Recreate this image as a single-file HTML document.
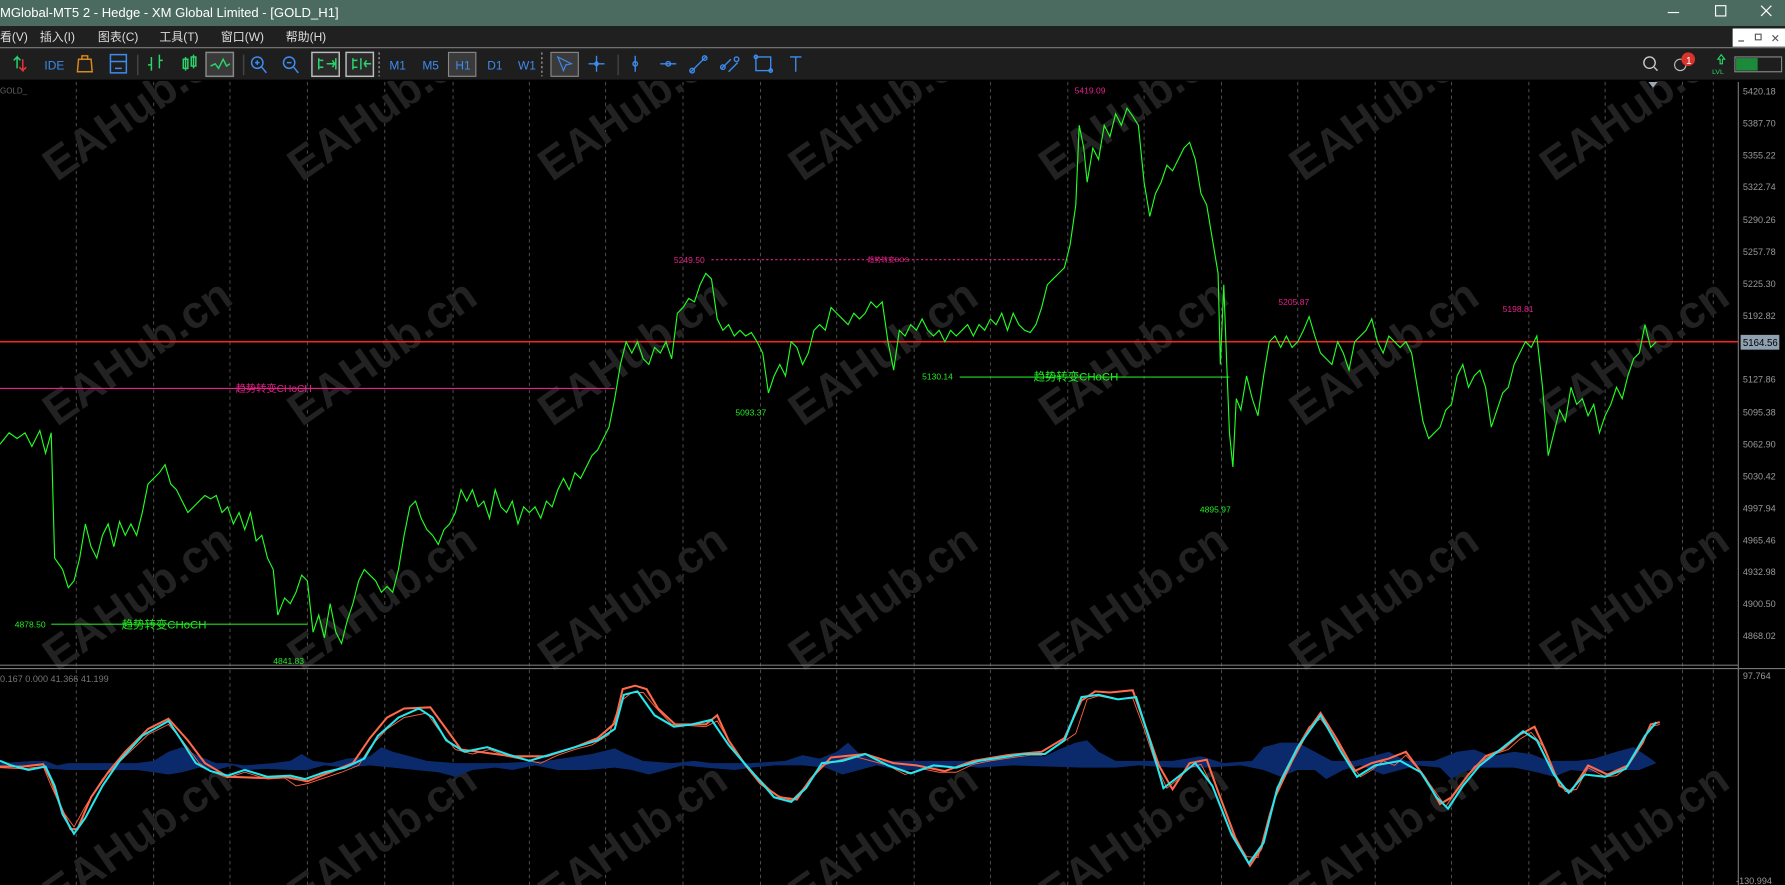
<!DOCTYPE html>
<html><head><meta charset="utf-8"><style>
html,body{margin:0;padding:0;background:#000;overflow:hidden}
svg{display:block}
text{font-family:"Liberation Sans","Noto Sans CJK SC",sans-serif}
</style></head><body>
<svg width="1785" height="885" viewBox="0 0 1568 777" preserveAspectRatio="none" xmlns="http://www.w3.org/2000/svg">
<defs><clipPath id="cc"><rect x="0" y="71" width="1568" height="706"/></clipPath></defs>
<!-- title bar -->
<rect x="0" y="0" width="1568" height="23" fill="#4b6b60"/>
<text x="0" y="15" font-size="11.5" fill="#fff">MGlobal-MT5 2 - Hedge - XM Global Limited - [GOLD_H1]</text>
<line x1="1465" y1="11" x2="1475" y2="11" stroke="#fff" stroke-width="1"/>
<rect x="1507" y="5" width="9" height="9" fill="none" stroke="#fff"/>
<path d="M1547 5l9 9M1556 5l-9 9" stroke="#fff"/>
<!-- menu -->
<rect x="0" y="23" width="1568" height="19" fill="#202020"/>
<g font-size="10.5" fill="#ddd">
<text x="0" y="36">看(V)</text><text x="35" y="36">插入(I)</text><text x="86" y="36">图表(C)</text><text x="140" y="36">工具(T)</text><text x="194" y="36">窗口(W)</text><text x="251" y="36">帮助(H)</text>
</g>
<rect x="1522" y="25" width="46" height="16" fill="#fff"/>
<path d="M1527 36h5M1542 30h5v5h-5zM1557 31l5 5M1562 31l-5 5" stroke="#555" fill="none"/>
<line x1="0" y1="42" x2="1568" y2="42" stroke="#8a8a8a"/>
<rect x="0" y="43" width="1568" height="27" fill="#1e1e1e"/>
<!-- toolbar icons -->
<g stroke-width="1.3" fill="none">
<path d="M15 60v-10l-3 3M15 50l3 3" stroke="#2bd46a"/><path d="M20 52v10l-3-3M20 62l3-3" stroke="#e33"/>
<text x="39" y="61" font-size="10.5" fill="#3c8cf0" stroke="none">IDE</text>
<path d="M69 52h11l1 11h-13zM72 52v-3h5v3" stroke="#d78a1c"/>
<path d="M97 48h14v16h-14zM97 54h14M101 60h6" stroke="#3c8cf0"/>
<line x1="121" y1="48" x2="121" y2="66" stroke="#444"/>
<path d="M133 50v12M130 57h3M140 48v12M140 53h3" stroke="#2bd46a"/>
<path d="M163 50v12M161 52h4v8h-4zM170 48v12M168 50h4v8h-4z" stroke="#2bd46a"/>
<rect x="181" y="46" width="24" height="21" fill="#3a3a3a" stroke="#888"/>
<path d="M185 58l4-2 3 4 4-8 3 6 3-2" stroke="#2bd46a"/>
<line x1="214" y1="48" x2="214" y2="66" stroke="#444"/>
<circle cx="226" cy="55" r="5" stroke="#3c8cf0"/><path d="M230 59l4 5M224 55h4M226 53v4" stroke="#3c8cf0"/>
<circle cx="254" cy="55" r="5" stroke="#3c8cf0"/><path d="M258 59l4 5M252 55h4" stroke="#3c8cf0"/>
<rect x="274" y="46" width="24" height="21" fill="#2a2a2a" stroke="#bbb"/>
<path d="M280 51v10M284 53h-4v6h4M287 56h7M292 53l2 3-2 3M295 51v10" stroke="#2bd46a"/>
<rect x="304" y="46" width="24" height="21" fill="#2a2a2a" stroke="#bbb"/>
<path d="M310 51v10M314 53h-4v6h4M317 51v10M320 56h6M322 53l-2 3 2 3" stroke="#2bd46a"/>
</g>
<line x1="333" y1="46" x2="333" y2="67" stroke="#aaa" stroke-dasharray="2,2"/>
<g font-size="10.5" fill="#3c8cf0"><text x="342" y="61">M1</text><text x="371" y="61">M5</text>
<rect x="394" y="46" width="24" height="21" fill="#3a3a3a" stroke="#888"/><text x="400" y="61">H1</text>
<text x="428" y="61">D1</text><text x="455" y="61">W1</text></g>
<line x1="476" y1="46" x2="476" y2="67" stroke="#aaa" stroke-dasharray="2,2"/>
<rect x="484" y="46" width="24" height="21" fill="#3a3a3a" stroke="#888"/>
<path d="M490 50l12 6-5 1-2 5z" stroke="#3c8cf0" fill="none"/>
<g stroke="#3c8cf0" fill="none" stroke-width="1.2">
<path d="M524 49v14M517 56h14"/><circle cx="524" cy="56" r="1.5"/>
<line x1="543" y1="48" x2="543" y2="66" stroke="#444"/>
<path d="M558 49v14"/><circle cx="558" cy="56" r="2"/>
<path d="M580 56h14"/><circle cx="587" cy="56" r="2"/>
<path d="M607 63l13-13"/><circle cx="608" cy="62" r="2"/><circle cx="619" cy="51" r="2"/>
<path d="M634 60l8-8M640 63l8-8"/><circle cx="635" cy="59" r="2"/><circle cx="647" cy="52" r="2"/>
<rect x="664" y="50" width="13" height="12"/><circle cx="664" cy="50" r="1.5"/><circle cx="677" cy="62" r="1.5"/>
<path d="M694 50h10M699 50v13"/>
</g>
<circle cx="1449" cy="55" r="5" stroke="#ccc" fill="none" stroke-width="1.2"/><path d="M1453 59l3 3" stroke="#ccc" stroke-width="1.2"/>
<circle cx="1476" cy="57" r="5" stroke="#bbb" fill="none"/><circle cx="1483" cy="52" r="6" fill="#d9342b"/><text x="1481" y="56" font-size="9" fill="#fff">1</text>
<path d="M1509 52l3-4 3 4h-2v4h-2v-4z" stroke="#2bd46a" fill="none"/><text x="1504" y="65" font-size="6" fill="#2bd46a">LVL</text>
<rect x="1524" y="50" width="41" height="13" fill="none" stroke="#888"/><rect x="1525" y="51" width="19" height="11" fill="#1c8a3a"/>
<!-- chart area -->
<rect x="0" y="70" width="1568" height="707" fill="#000"/>
<text x="0" y="82" font-size="7" fill="#666">GOLD_</text>
<g stroke="#555" stroke-dasharray="3,3" stroke-width="0.8">
<line x1="67" y1="72" x2="67" y2="777"/><line x1="135" y1="72" x2="135" y2="777"/><line x1="202" y1="72" x2="202" y2="777"/><line x1="270" y1="72" x2="270" y2="777"/><line x1="338" y1="72" x2="338" y2="777"/><line x1="398" y1="72" x2="398" y2="777"/><line x1="465" y1="72" x2="465" y2="777"/><line x1="532" y1="72" x2="532" y2="777"/><line x1="600" y1="72" x2="600" y2="777"/><line x1="668" y1="72" x2="668" y2="777"/><line x1="735" y1="72" x2="735" y2="777"/><line x1="803" y1="72" x2="803" y2="777"/><line x1="870" y1="72" x2="870" y2="777"/><line x1="938" y1="72" x2="938" y2="777"/><line x1="1005" y1="72" x2="1005" y2="777"/><line x1="1073" y1="72" x2="1073" y2="777"/><line x1="1140" y1="72" x2="1140" y2="777"/><line x1="1208" y1="72" x2="1208" y2="777"/><line x1="1275" y1="72" x2="1275" y2="777"/><line x1="1343" y1="72" x2="1343" y2="777"/><line x1="1410" y1="72" x2="1410" y2="777"/><line x1="1478" y1="72" x2="1478" y2="777"/><line x1="1505" y1="72" x2="1505" y2="777"/>
</g>
<!-- watermarks -->
<g clip-path="url(#cc)" font-size="40" font-weight="bold" fill="#222" font-family="Liberation Sans,sans-serif">
<text transform="translate(50,160) rotate(-35)">EAHub.cn</text><text transform="translate(265,160) rotate(-35)">EAHub.cn</text><text transform="translate(485,160) rotate(-35)">EAHub.cn</text><text transform="translate(705,160) rotate(-35)">EAHub.cn</text><text transform="translate(925,160) rotate(-35)">EAHub.cn</text><text transform="translate(1145,160) rotate(-35)">EAHub.cn</text><text transform="translate(1365,160) rotate(-35)">EAHub.cn</text>
<text transform="translate(50,375) rotate(-35)">EAHub.cn</text><text transform="translate(265,375) rotate(-35)">EAHub.cn</text><text transform="translate(485,375) rotate(-35)">EAHub.cn</text><text transform="translate(705,375) rotate(-35)">EAHub.cn</text><text transform="translate(925,375) rotate(-35)">EAHub.cn</text><text transform="translate(1145,375) rotate(-35)">EAHub.cn</text><text transform="translate(1365,375) rotate(-35)">EAHub.cn</text>
<text transform="translate(50,590) rotate(-35)">EAHub.cn</text><text transform="translate(265,590) rotate(-35)">EAHub.cn</text><text transform="translate(485,590) rotate(-35)">EAHub.cn</text><text transform="translate(705,590) rotate(-35)">EAHub.cn</text><text transform="translate(925,590) rotate(-35)">EAHub.cn</text><text transform="translate(1145,590) rotate(-35)">EAHub.cn</text><text transform="translate(1365,590) rotate(-35)">EAHub.cn</text>
<text transform="translate(50,800) rotate(-35)">EAHub.cn</text><text transform="translate(265,800) rotate(-35)">EAHub.cn</text><text transform="translate(485,800) rotate(-35)">EAHub.cn</text><text transform="translate(705,800) rotate(-35)">EAHub.cn</text><text transform="translate(925,800) rotate(-35)">EAHub.cn</text><text transform="translate(1145,800) rotate(-35)">EAHub.cn</text><text transform="translate(1365,800) rotate(-35)">EAHub.cn</text>
</g>
<!-- axis -->
<line x1="1527" y1="72" x2="1527" y2="777" stroke="#777"/>
<g font-size="8" fill="#999">
<text x="1531" y="83">5420.18</text><text x="1531" y="111">5387.70</text><text x="1531" y="139">5355.22</text><text x="1531" y="167">5322.74</text><text x="1531" y="196">5290.26</text><text x="1531" y="224">5257.78</text><text x="1531" y="252">5225.30</text><text x="1531" y="280">5192.82</text><text x="1531" y="336">5127.86</text><text x="1531" y="365">5095.38</text><text x="1531" y="393">5062.90</text><text x="1531" y="421">5030.42</text><text x="1531" y="449">4997.94</text><text x="1531" y="477">4965.46</text><text x="1531" y="505">4932.98</text><text x="1531" y="533">4900.50</text><text x="1531" y="561">4868.02</text><text x="1531" y="596">97.764</text><text x="1525" y="776">-130.994</text>
</g>
<path d="M1448 72l4 5 4-5z" fill="#9ab"/>
<!-- separator -->
<line x1="0" y1="584" x2="1527" y2="584" stroke="#777"/><line x1="0" y1="587" x2="1568" y2="587" stroke="#777"/>
<text x="0" y="599" font-size="8" fill="#777">0.167 0.000 41.366 41.199</text>
<!-- structure lines -->
<line x1="0" y1="341" x2="540" y2="341" stroke="#e8218a" stroke-width="1"/>
<text x="207" y="344" font-size="9" fill="#e8218a">趋势转变CHoCH</text>
<line x1="625" y1="228" x2="938" y2="228" stroke="#e8218a" stroke-dasharray="2,2"/>
<text x="592" y="231" font-size="7.5" fill="#e8218a">5249.50</text><text x="762" y="230" font-size="6" fill="#e8218a">趋势转变BOS</text>
<line x1="843" y1="331" x2="1080" y2="331" stroke="#22dd22"/>
<text x="810" y="333" font-size="7.5" fill="#22ee22">5130.14</text><text x="908" y="334" font-size="10" fill="#22ee22">趋势转变CHoCH</text>
<line x1="45" y1="548" x2="270" y2="548" stroke="#22dd22"/>
<text x="13" y="551" font-size="7.5" fill="#22ee22">4878.50</text><text x="107" y="552" font-size="10" fill="#22ee22">趋势转变CHoCH</text>
<g font-size="7.5">
<text x="646" y="365" fill="#22ee22">5093.37</text><text x="240" y="583" fill="#22ee22">4841.83</text><text x="1054" y="450" fill="#22ee22">4895.97</text>
<text x="944" y="82" fill="#e8218a">5419.09</text><text x="1123" y="268" fill="#e8218a">5205.87</text><text x="1320" y="274" fill="#e8218a">5198.81</text>
</g>
<line x1="0" y1="300" x2="1527" y2="300" stroke="#ff2020" stroke-width="1.3"/>
<rect x="1529" y="294" width="34" height="13" fill="#8fa0b0"/><text x="1531" y="304" font-size="8.5" fill="#000">5164.56</text>
<!-- price line -->
<polyline fill="none" stroke="#22ff22" stroke-width="1" points="0,390 8,380 15,385 22,380 28,392 35,378 40,398 45,380 48,490 55,500 60,516 65,510 70,490 75,460 80,480 85,490 90,470 95,460 100,480 105,458 110,470 115,460 120,470 125,450 130,425 135,420 140,415 145,408 150,425 155,430 160,440 165,450 170,445 175,440 180,435 185,438 190,435 195,450 200,445 205,460 210,450 215,465 220,450 225,475 230,470 235,490 240,500 244,540 250,525 255,530 260,520 265,505 270,510 275,555 280,540 285,560 290,530 295,555 300,565 305,545 310,530 315,510 320,500 325,505 330,510 335,520 340,515 345,520 350,500 355,470 360,445 365,440 370,455 375,465 380,470 385,478 390,465 395,460 400,450 405,430 410,440 415,430 420,445 425,440 430,455 435,430 440,445 445,450 450,440 455,460 460,445 465,450 470,445 475,455 480,440 485,445 490,430 495,420 500,430 505,415 510,420 515,410 520,400 525,395 530,385 535,375 540,350 545,320 550,300 555,310 560,300 565,315 570,320 575,305 580,310 585,300 590,315 595,275 600,270 605,262 610,265 615,250 620,240 625,245 630,280 635,290 640,285 645,295 650,290 655,295 660,292 665,300 670,310 675,345 680,330 685,320 690,330 695,300 700,305 705,320 710,310 715,290 720,285 725,290 730,270 735,275 740,280 745,285 750,275 755,280 760,275 765,265 770,270 775,265 780,300 785,325 790,290 795,295 800,285 805,290 810,280 815,290 820,295 825,290 830,300 835,290 840,295 845,290 850,285 855,295 860,285 865,290 870,280 875,285 880,275 885,290 890,275 895,285 900,290 905,292 910,285 915,270 920,250 925,245 930,240 935,235 940,215 945,180 948,110 952,130 955,160 960,130 965,140 970,110 975,120 980,100 985,110 990,95 995,102 1000,110 1005,160 1010,190 1015,170 1020,160 1025,145 1030,150 1035,140 1040,130 1045,125 1050,140 1055,170 1060,180 1065,210 1070,240 1072,320 1075,250 1078,330 1080,380 1083,410 1086,350 1090,360 1095,330 1100,350 1105,365 1110,330 1115,300 1120,295 1125,305 1130,295 1135,305 1140,300 1145,290 1150,278 1155,295 1160,310 1165,315 1170,320 1175,300 1180,310 1185,325 1190,300 1195,295 1200,290 1205,280 1210,300 1215,310 1220,295 1225,300 1230,305 1235,300 1240,310 1245,340 1250,370 1255,385 1260,380 1265,375 1270,360 1275,355 1280,330 1285,320 1290,340 1295,330 1300,325 1305,340 1310,375 1315,360 1320,345 1325,340 1330,320 1335,310 1340,300 1345,305 1350,295 1355,340 1360,400 1365,380 1370,360 1375,370 1380,340 1385,355 1390,350 1395,365 1400,355 1405,380 1410,365 1415,355 1420,340 1425,350 1430,330 1435,315 1440,310 1445,285 1450,305 1455,300"/>
<!-- histogram -->
<path fill="#0b2a6b" d="M0,670 L30,668 40,668 50,672 60,670 110,670 120,670 135,668 148,660 160,656 175,664 190,670 200,670 215,672 240,670 255,668 265,662 275,668 290,670 305,666 325,664 335,656 345,660 360,664 375,668 400,670 440,670 480,668 520,662 540,657 550,662 565,668 590,670 610,668 625,670 660,670 690,668 705,663 720,666 735,660 745,652 755,662 770,668 800,668 830,668 860,668 880,666 900,664 918,664 930,658 945,652 955,650 965,660 980,668 1000,668 1030,668 1055,664 1075,670 1100,668 1110,656 1125,652 1140,652 1155,660 1170,668 1190,668 1205,664 1220,660 1235,668 1260,668 1280,660 1295,658 1310,664 1330,660 1345,662 1360,668 1385,668 1400,666 1420,660 1435,656 1450,666 1455,670 L1440,676 1420,676 1400,678 1380,676 1365,682 1350,678 1330,674 1300,674 1285,678 1275,684 1265,674 1245,672 1230,676 1215,680 1205,676 1195,672 1180,676 1165,684 1155,676 1140,676 1125,682 1110,676 1090,672 1060,674 1030,674 1000,672 980,674 950,674 920,673 890,672 860,674 840,672 810,676 790,676 770,672 755,676 740,680 725,674 705,672 680,672 660,674 645,676 620,674 600,672 585,676 570,680 555,676 540,674 515,676 490,676 470,672 450,676 435,674 415,676 400,682 385,678 365,676 345,674 325,672 305,674 285,672 270,676 255,676 235,675 215,676 205,672 190,676 175,674 160,678 148,680 135,678 120,676 100,676 75,676 60,676 45,675 30,672 15,672 0,672 Z"/>
<!-- oscillator -->
<polyline fill="none" stroke="#ff6040" stroke-width="0.8" points="0,674 20,675 38,673 45,690 55,712 65,726 75,708 90,684 110,664 130,645 148,636 160,650 175,670 185,677 200,683 215,678 235,684 250,683 260,690 270,688 285,683 300,678 315,672 325,656 340,640 355,630 375,626 385,640 400,658 415,662 430,658 445,664 460,667 475,670 490,663 505,658 520,654 535,645 545,616 555,608 565,608 575,620 590,636 605,637 620,638 630,633 640,650 650,666 665,682 680,697 695,703 705,693 720,673 735,668 750,664 765,668 780,672 795,680 810,675 825,678 840,678 855,671 870,668 890,665 905,663 915,663 930,654 945,644 955,614 965,611 980,614 995,613 1005,640 1015,670 1025,692 1035,684 1045,674 1055,671 1065,690 1080,728 1095,752 1105,753 1115,715 1125,684 1140,655 1150,638 1160,631 1170,645 1185,668 1195,682 1205,676 1215,668 1225,672 1235,663 1250,680 1260,694 1270,708 1280,694 1295,673 1310,663 1325,658 1335,649 1345,643 1355,655 1365,677 1375,695 1385,693 1395,674 1410,682 1420,681 1430,673 1440,654 1450,638 1458,636"/>
<polyline fill="none" stroke="#ff6a4a" stroke-width="1.8" points="0,673 20,673 38,671 45,685 52,705 62,728 68,728 80,700 95,678 110,660 130,640 148,631 165,650 180,670 200,682 230,683 250,682 270,686 290,678 310,670 325,648 340,630 355,622 378,621 392,640 405,658 420,660 450,664 480,664 505,656 525,648 540,635 547,605 558,602 568,605 578,622 593,636 620,636 630,628 640,650 655,672 668,688 685,700 700,702 712,684 730,665 760,662 785,670 805,672 830,677 855,668 885,663 915,660 935,648 950,615 962,607 975,608 995,606 1007,640 1018,672 1030,693 1045,670 1060,667 1070,695 1085,735 1098,760 1108,745 1120,700 1135,668 1150,640 1160,626 1175,650 1190,677 1205,670 1220,666 1235,660 1252,683 1265,706 1275,700 1290,680 1305,664 1320,658 1335,645 1348,638 1358,660 1370,690 1380,695 1395,672 1412,680 1430,672 1443,652 1450,636 1458,634"/>
<polyline fill="none" stroke="#22e8f0" stroke-width="1.8" points="0,668 10,672 25,676 40,673 48,690 55,715 65,732 75,718 90,690 105,668 125,646 148,633 158,648 172,670 185,677 200,681 215,676 235,682 255,681 268,684 285,678 303,674 320,666 332,646 350,630 368,622 380,630 392,650 408,660 428,656 445,662 465,668 485,662 505,656 525,650 540,640 548,610 560,607 575,628 592,638 608,636 625,632 640,654 652,668 668,686 680,700 695,704 708,692 722,670 740,668 760,662 780,672 800,679 820,672 840,674 860,668 880,665 900,662 918,662 935,650 950,612 965,610 982,614 998,612 1010,650 1022,692 1035,682 1050,670 1065,690 1082,733 1097,758 1110,740 1122,692 1140,656 1160,628 1178,660 1192,682 1208,672 1230,668 1248,678 1262,700 1272,710 1285,690 1300,672 1318,658 1338,642 1350,650 1365,680 1378,696 1392,680 1410,682 1428,675 1445,646 1455,634"/>
</svg>
</body></html>
